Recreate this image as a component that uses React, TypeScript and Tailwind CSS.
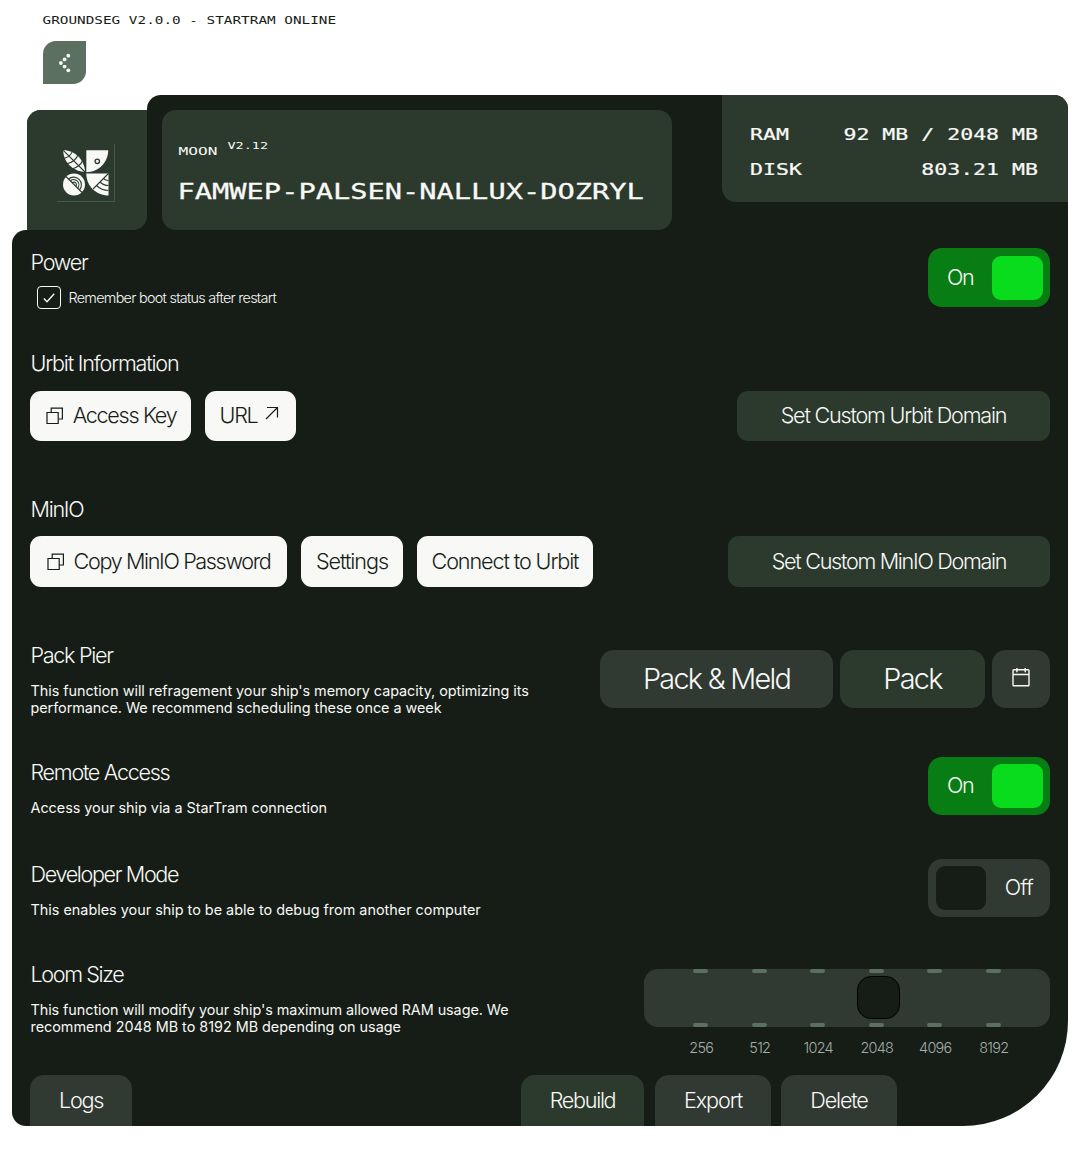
import React from "react";

const MONO = "font-['DejaVu_Sans_Mono',monospace] whitespace-pre";

function Pixel({ children, className = "" }: { children: React.ReactNode; className?: string }) {
  return <span className={`${MONO} block leading-none uppercase ${className}`}>{children}</span>;
}

function Heading({ children, tracking = "tracking-[-0.06em]" }: { children: React.ReactNode; tracking?: string }) {
  return <h2 className={`h-[26px] pl-[0.5px] text-[21.6px] leading-[26px] font-light whitespace-nowrap ${tracking}`}>{children}</h2>;
}

function Description({ children, tracking = "tracking-normal" }: { children: React.ReactNode; tracking?: string }) {
  return <p className={`mt-[14px] pl-[0.5px] text-[14.4px] leading-[17.3px] whitespace-pre ${tracking}`}>{children}</p>;
}

function Button({
  children,
  className = "",
  tracking = "tracking-[-0.06em]",
}: {
  children: React.ReactNode;
  className?: string;
  tracking?: string;
}) {
  return (
    <button className={`flex items-center justify-center pb-[2px] text-[21.6px] leading-[26px] font-light whitespace-nowrap ${tracking} ${className}`}>
      {children}
    </button>
  );
}

function Toggle({ on, className = "h-[58px]" }: { on: boolean; className?: string }) {
  return on ? (
    <div className={`flex w-[122px] items-center justify-between rounded-[14px] bg-[#087d13] pr-[7px] pl-[19px] ${className}`}>
      <span className="pb-[2px] text-[21.6px] leading-[26px] font-light tracking-[-0.06em]">On</span>
      <span className="h-11 w-[51px] rounded-[9px] bg-[#08dc1c]" />
    </div>
  ) : (
    <div className={`flex w-[122px] items-center justify-between rounded-[14px] bg-[#313933] pr-[17px] pl-2 ${className}`}>
      <span className="h-11 w-[50px] rounded-[9px] bg-[#161d17]" />
      <span className="pb-[2px] text-[21.6px] leading-[26px] font-light tracking-[-0.035em]">Off</span>
    </div>
  );
}

function CopyIcon() {
  return (
    <svg width="18" height="18" viewBox="0 0 18 18" fill="none" stroke="#161d17" strokeWidth="1.2" className="mt-[2px] mr-[9px] ml-px">
      <path d="M1 5.5H12.2V16.5H1Z" />
      <path d="M5.2 5.5V1.2H16.4V12H12.2" />
    </svg>
  );
}

function ArrowIcon() {
  return (
    <svg width="14" height="14" viewBox="0 0 14 14" fill="none" stroke="#161d17" strokeWidth="1.2" className="mr-[2px] mb-[5px] ml-2">
      <path d="M2 1.5H12.5V11.5M12.5 1.5L1 13" />
    </svg>
  );
}

function CalendarIcon() {
  return (
    <svg width="18" height="20" viewBox="0 0 18 20" fill="none" stroke="#f8f8f6" strokeWidth="1.4" className="mb-1">
      <rect x="1" y="2.7" width="16" height="16" rx="0.8" />
      <path d="M1 7.5H17M4.9 1V5.2M13.2 1V5.2" />
    </svg>
  );
}

function ShipLogo() {
  return (
    <svg width="58" height="58" viewBox="0 0 58 58" fill="none">
      <path d="M57.5 0V57.5H0" stroke="#48574a" />
      <path d="M6.3 6.3C17 6 27.5 15 28 28C15 27.5 6 17 6.3 6.3Z" fill="#f8f8f6" />
      <path
        d="M6.3 6.3L28 28M15.5 6.5Q14.5 12 7 14.5M21 10.5Q19 17.5 9.5 20M25.5 16.5Q23.5 22.5 15 25"
        stroke="#2c3a2e"
        strokeWidth="1.1"
      />
      <path d="M29.3 6.3H51.2C51.2 18.4 41.4 28.2 29.3 28.2Z" fill="#f8f8f6" />
      <circle cx="40.3" cy="17.3" r="2.2" stroke="#2c3a2e" strokeWidth="1.3" />
      <circle cx="17" cy="40.5" r="11" fill="#f8f8f6" />
      <g stroke="#2c3a2e" strokeWidth="1.1">
        <path d="M9 32.5L25 48.5" />
        <path d="M11.5 35A7.8 7.8 0 0 1 22.5 46" />
        <path d="M13.4 36.9A5.1 5.1 0 0 1 20.6 44.1" />
        <path d="M15.3 38.8A2.4 2.4 0 0 1 18.7 42.2" />
      </g>
      <path d="M29.3 29.5H51.5V51.5C39 51.5 29.3 42 29.3 29.5Z" fill="#f8f8f6" />
      <g stroke="#2c3a2e" strokeWidth="1.1">
        <path d="M51.5 29.5L36 45" />
        <path d="M46.5 34.5Q48.5 36.5 51.5 36.5M43 38Q46.5 41.5 51.5 41.5M39.5 41.5Q44.5 46.5 51.5 46.5" />
      </g>
    </svg>
  );
}

function BackButton() {
  return (
    <button className="mt-[14px] ml-[43px] flex size-[43px] items-center justify-center rounded-tl-[13px] rounded-br-[13px] bg-[#5c7060]">
      <svg width="12" height="20" viewBox="0 0 12 20" fill="#f8f8f6">
        <circle cx="9.3" cy="2.7" r="1.9" />
        <circle cx="5.6" cy="6.4" r="1.9" />
        <circle cx="1.9" cy="10" r="1.9" />
        <circle cx="5.6" cy="13.6" r="1.9" />
        <circle cx="9.3" cy="17.3" r="1.9" />
      </svg>
    </button>
  );
}

const sizes = ["256", "512", "1024", "2048", "4096", "8192"];

function LoomSlider() {
  return (
    <div className="w-[406px]">
      <div className="relative h-[58px] rounded-[14px] bg-[#313933]">
        <div className="flex h-full justify-between pr-[49.5px] pl-[49px]">
          {sizes.map((s) => (
            <div key={s} className="flex w-[15px] flex-col justify-between">
              <span className="h-1 rounded-[2px] bg-[#5c7060]" />
              <span className="h-1 rounded-[2px] bg-[#5c7060]" />
            </div>
          ))}
        </div>
        <span className="absolute top-[7px] left-[213px] size-[43px] rounded-[14px] border border-black bg-[#161d17]" />
      </div>
      <div className="mt-3 flex pr-[27px] pl-[28px] text-center text-[14.4px] leading-[18px] font-light tracking-[-0.05em] text-[#a3afa6]">
        {sizes.map((s) => (
          <span key={s} className="flex-1">
            {s}
          </span>
        ))}
      </div>
    </div>
  );
}

export default function App() {
  return (
    <div className="h-[1172px] w-[1079px] overflow-hidden bg-white font-['Inter',sans-serif] text-[#f8f8f6]">
      <div className="flex h-[27px] items-end pl-[42.5px]">
        <Pixel className="scale-y-[0.7] text-[14.35px] text-[#161d17]">Groundseg v2.0.0 - StarTram Online</Pixel>
      </div>
      <BackButton />

      <header className="mt-[11px] ml-[27px] flex h-[135px] w-[1041px] items-end">
        <div className="size-[120px] rounded-tl-[14px] bg-[#161d17]">
          <div className="flex size-full items-center justify-center rounded-tl-[14px] rounded-br-[14px] bg-[#2c3a2e] pt-[6px] pr-[2px]">
            <ShipLogo />
          </div>
        </div>
        <div className="flex h-full flex-1 items-start justify-between rounded-t-[14px] bg-[#161d17] pl-[15px]">
          <div className="mt-[15px] h-[120px] w-[510px] rounded-[14px] bg-[#2c3a2e] pt-[28px] pl-4">
            <div className="flex pl-[0.5px]">
              <Pixel className="mt-[5px] scale-y-[0.7] text-[16.2px]">Moon</Pixel>
              <Pixel className="ml-[10px] scale-y-[0.7] text-[13.5px]">v2.12</Pixel>
            </div>
            <Pixel className="mt-[19px] -ml-[0.5px] scale-y-[0.74] text-[28.7px] [-webkit-text-stroke:0.4px_#f8f8f6]">
              famwep-palsen-nallux-dozryl
            </Pixel>
          </div>
          <div className="flex h-[107px] w-[346px] flex-col gap-[13px] rounded-tr-[14px] rounded-bl-[14px] bg-[#2c3a2e] pt-[29px] pr-[30px] pl-7 text-[21.55px] [-webkit-text-stroke:0.3px_#f8f8f6]">
            <div className="flex justify-between">
              <Pixel className="scale-y-[0.72]">RAM</Pixel>
              <Pixel className="scale-y-[0.72]">92 MB / 2048 MB</Pixel>
            </div>
            <div className="flex justify-between">
              <Pixel className="scale-y-[0.72]">DISK</Pixel>
              <Pixel className="scale-y-[0.72]">803.21 MB</Pixel>
            </div>
          </div>
        </div>
      </header>

      <main className="ml-3 flex h-[896px] w-[1056px] flex-col rounded-tl-[14px] rounded-br-[105px] rounded-bl-[14px] bg-[#161d17] pt-[18px] pr-[18px] pl-[18px]">
        <section className="flex h-[102px] items-start justify-between">
          <div className="pt-px">
            <Heading>Power</Heading>
            <label className="mt-[11px] ml-[7px] flex items-center">
              <span className="flex h-[23px] w-6 items-center justify-center rounded-[4px] border border-[#f8f8f6]">
                <svg width="12" height="10" viewBox="0 0 12 10" fill="none" stroke="#f8f8f6" strokeWidth="1.4">
                  <path d="M0.8 5.5L4 8.8L11.2 0.8" />
                </svg>
              </span>
              <span className="ml-[7.5px] text-[14.4px] leading-[18px] font-light tracking-[-0.05em]">Remember boot status after restart</span>
            </label>
          </div>
          <Toggle on className="h-[59px] pt-px" />
        </section>

        <section className="h-[146px]">
          <Heading tracking="tracking-[-0.055em]">Urbit Information</Heading>
          <div className="mt-[15px] flex justify-between">
            <div className="flex gap-[14px] text-[#161d17]">
              <Button className="h-[50px] w-[161px] rounded-[11px] bg-[#f8f8f6]">
                <CopyIcon />
                Access Key
              </Button>
              <Button className="h-[50px] w-[91px] rounded-[11px] bg-[#f8f8f6]">
                URL
                <ArrowIcon />
              </Button>
            </div>
            <Button tracking="tracking-[-0.056em]" className="h-[50px] w-[313px] rounded-[11px] bg-[#2c3a2e]">
              Set Custom Urbit Domain
            </Button>
          </div>
        </section>

        <section className="h-[146px]">
          <Heading>MinIO</Heading>
          <div className="mt-[14px] flex justify-between">
            <div className="flex gap-[14px] text-[#161d17]">
              <Button tracking="tracking-[-0.063em]" className="h-[51px] w-[257px] rounded-[11px] bg-[#f8f8f6] pr-px">
                <CopyIcon />
                Copy MinIO Password
              </Button>
              <Button tracking="tracking-[-0.048em]" className="h-[51px] w-[102px] rounded-[11px] bg-[#f8f8f6]">
                Settings
              </Button>
              <Button tracking="tracking-[-0.051em]" className="h-[51px] w-[176px] rounded-[11px] bg-[#f8f8f6]">
                Connect to Urbit
              </Button>
            </div>
            <Button className="h-[51px] w-[322px] rounded-[11px] bg-[#2c3a2e]">Set Custom MinIO Domain</Button>
          </div>
        </section>

        <section className="flex h-[117px] items-start justify-between">
          <div>
            <Heading>Pack Pier</Heading>
            <Description tracking="tracking-[-0.045px]">
              {"This function will refragement your ship's memory capacity, optimizing its\nperformance. We recommend scheduling these once a week"}
            </Description>
          </div>
          <div className="mt-2 flex h-[58px] gap-[7px] text-[28.8px] font-light tracking-[-0.06em]">
            <button className="w-[233px] rounded-[14px] bg-[#313933]">Pack &amp; Meld</button>
            <button className="w-[145px] rounded-[14px] bg-[#2c3a2e]">Pack</button>
            <button className="flex w-[58px] items-center justify-center rounded-[14px] bg-[#313933]">
              <CalendarIcon />
            </button>
          </div>
        </section>

        <section className="flex h-[102px] items-start justify-between">
          <div>
            <Heading>Remote Access</Heading>
            <Description tracking="tracking-[-0.03px]">Access your ship via a StarTram connection</Description>
          </div>
          <div className="-mt-[2px]">
            <Toggle on />
          </div>
        </section>

        <section className="flex h-[100px] items-start justify-between">
          <div>
            <Heading tracking="tracking-[-0.063em]">Developer Mode</Heading>
            <Description>This enables your ship to be able to debug from another computer</Description>
          </div>
          <div className="-mt-[2px]">
            <Toggle on={false} />
          </div>
        </section>

        <section className="flex h-[114px] items-start justify-between">
          <div>
            <Heading tracking="tracking-[-0.064em]">Loom Size</Heading>
            <Description tracking="tracking-[-0.065px]">
              {"This function will modify your ship's maximum allowed RAM usage. We\n"}
              <span className="tracking-[-0.02px]">recommend 2048 MB to 8192 MB depending on usage</span>
            </Description>
          </div>
          <div className="mt-2">
            <LoomSlider />
          </div>
        </section>

        <footer className="flex">
          <Button className="h-[51px] w-[102px] rounded-t-[14px] bg-[#313933]">Logs</Button>
          <Button className="ml-[389px] h-[51px] w-[123px] rounded-t-[14px] bg-[#2c3a2e]">Rebuild</Button>
          <Button tracking="tracking-[-0.05em]" className="ml-[11px] h-[51px] w-[116px] rounded-t-[14px] bg-[#313933]">
            Export
          </Button>
          <Button tracking="tracking-[-0.055em]" className="ml-[10px] h-[51px] w-[116px] rounded-t-[14px] bg-[#313933]">
            Delete
          </Button>
        </footer>
      </main>
    </div>
  );
}
